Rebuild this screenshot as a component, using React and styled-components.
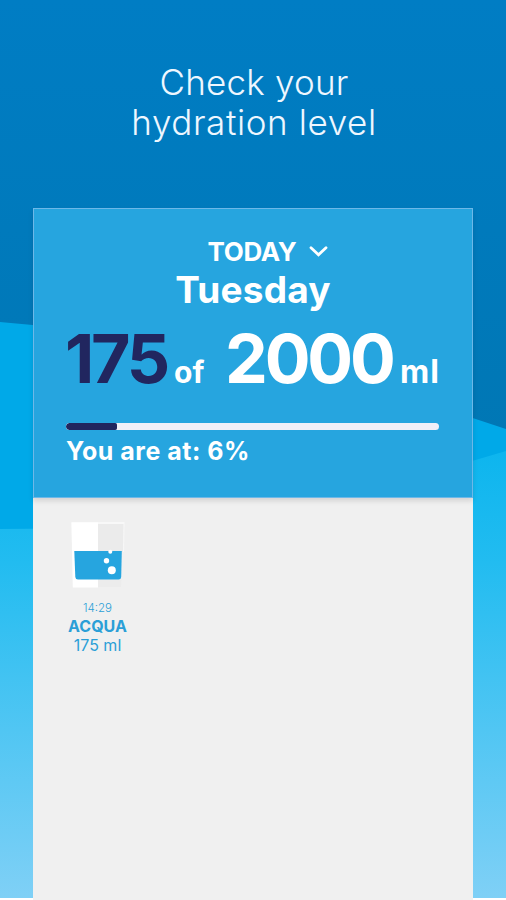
import styled, { createGlobalStyle } from 'styled-components';

const consumed = { amount: 175, goal: 2000, percent: 6, barWidth: 13.7 };

const drinks = [{ time: '14:29', name: 'ACQUA', amount: '175 ml' }];

const App = () => {
  return (
    <>
      <GlobalStyle />
      <Screen>
        <Backdrop />
        <Headline>
          <HeadlineLine $spacing='0.2px'>Check your</HeadlineLine>
          <HeadlineLine $spacing='0.6px'>hydration level</HeadlineLine>
        </Headline>
        <Phone>
          <Summary>
            <Period>
              <span>TODAY</span>
              <Chevron />
            </Period>
            <Day>Tuesday</Day>
            <Amounts>
              <Consumed>{consumed.amount}</Consumed>
              <Of>of</Of>
              <Goal>{consumed.goal}</Goal>
              <Unit>ml</Unit>
            </Amounts>
            <Track>
              <Progress style={{ width: `${consumed.barWidth}%` }} />
            </Track>
            <Status>You are at: {consumed.percent}%</Status>
          </Summary>
          <DrinkList>
            {drinks.map((drink) => (
              <Drink key={drink.time}>
                <Glass />
                <DrinkTime>{drink.time}</DrinkTime>
                <DrinkName>{drink.name}</DrinkName>
                <DrinkAmount>{drink.amount}</DrinkAmount>
              </Drink>
            ))}
          </DrinkList>
        </Phone>
      </Screen>
    </>
  );
};

const Backdrop = () => (
  <BackdropSvg viewBox='0 0 506 900' preserveAspectRatio='none'>
    <defs>
      <linearGradient id='deep' x1='0' y1='0' x2='0' y2='1'>
        <stop offset='0' stopColor='#007dc4' />
        <stop offset='1' stopColor='#0077b4' />
      </linearGradient>
      <linearGradient id='shallow' x1='0' y1='450' x2='0' y2='898' gradientUnits='userSpaceOnUse'>
        <stop offset='0' stopColor='#0db5ee' />
        <stop offset='0.25' stopColor='#22bcf0' />
        <stop offset='1' stopColor='#7fd0f6' />
      </linearGradient>
    </defs>
    <rect width='506' height='900' fill='#fff' />
    <rect width='506' height='460' fill='url(#deep)' />
    <path d='M0 322 Q250 343 506 429 V898 H0Z' fill='#00a9e8' />
    <path d='M0 529 Q250 529 506 451 V898 H0Z' fill='url(#shallow)' />
  </BackdropSvg>
);

const Chevron = () => (
  <svg width='20' height='14' viewBox='0 0 20 14' fill='none'>
    <path
      d='M3 3.8 L10.5 10.8 L18 3.8'
      stroke='#fff'
      strokeWidth='2.8'
      strokeLinecap='round'
    />
  </svg>
);

const Glass = () => (
  <GlassSvg width='56' height='68' viewBox='0 0 56 68'>
    <path d='M1.5 1 H54.5 L54 31 H2Z' fill='#f8f8f8' />
    <path d='M1.5 1.5 H28 V66.5 H2.8Z' fill='#fff' />
    <path d='M28 3 H53.5 L53 31 H28Z' fill='#ebebeb' />
    <path d='M28 58 H51.5 L51 66 H28Z' fill='#ececec' />
    <path
      d='M4.3 30 H51.8 L51.2 56 Q51 58.5 48.5 58.5 H8 Q5.6 58.5 5.3 56Z'
      fill='#26a5df'
    />
    <circle cx='40.3' cy='30.7' r='2' fill='#fff' />
    <circle cx='36.5' cy='39.8' r='2.7' fill='#fff' />
    <circle cx='41.8' cy='49.2' r='4' fill='#fff' />
  </GlassSvg>
);

const GlobalStyle = createGlobalStyle`
  * {
    box-sizing: border-box;
  }

  body {
    margin: 0;
    font-family: Inter, 'Liberation Sans', sans-serif;
  }
`;

const Screen = styled.main`
  position: relative;
  display: flex;
  flex-direction: column;
  align-items: center;
  width: 506px;
  height: 900px;
  overflow: hidden;
`;

const BackdropSvg = styled.svg`
  position: absolute;
  inset: 0;
  z-index: -1;
  width: 100%;
  height: 100%;
`;

const Headline = styled.h1`
  width: 100%;
  height: 208px;
  margin: 0;
  padding-top: 62px;
  color: #eef7ff;
  font-size: 35px;
  font-weight: 300;
  line-height: 40px;
  text-align: center;
  flex: none;
`;

const HeadlineLine = styled.span`
  display: block;
  padding-left: 2px;
  letter-spacing: ${({ $spacing }) => $spacing};
`;

const Phone = styled.section`
  display: flex;
  flex-direction: column;
  flex: 1;
  width: 440px;
  background: #f0f0f0;
`;

const Summary = styled.header`
  height: 290px;
  padding: 25px 32px 0;
  border: 1px solid #6db8e8;
  background: #26a5df;
  box-shadow: 0 3px 5px rgba(0, 0, 0, 0.12);
  color: #fff;
  font-weight: 700;
`;

const Period = styled.div`
  display: flex;
  align-items: center;
  justify-content: center;
  gap: 11px;
  height: 34px;
  padding-left: 29px;
  font-size: 26px;
  letter-spacing: -0.3px;
`;

const Day = styled.h2`
  margin: 0;
  font-size: 37px;
  letter-spacing: 0.2px;
  line-height: 44px;
  text-align: center;
`;

const Amounts = styled.div`
  display: flex;
  align-items: baseline;
  height: 82px;
  margin-top: 5px;
  line-height: 82px;
  white-space: nowrap;
`;

const Consumed = styled.span`
  width: 109px;
  margin-left: -1px;
  color: #21265f;
  font-size: 68px;
  letter-spacing: -3.2px;
`;

const Of = styled.span`
  width: 51px;
  font-size: 30px;
`;

const Goal = styled.span`
  width: 175px;
  font-size: 68px;
  letter-spacing: -3.2px;
`;

const Unit = styled.span`
  font-size: 32px;
  letter-spacing: 1px;
`;

const Track = styled.div`
  height: 7px;
  width: 373px;
  margin-top: 24px;
  overflow: hidden;
  border-radius: 4px;
  background: #f0f0f8;
`;

const Progress = styled.div`
  height: 100%;
  border-radius: 4px 2px 2px 4px;
  background: #21265f;
`;

const Status = styled.p`
  margin: 6px 0 0;
  font-size: 25px;
  letter-spacing: 0.5px;
  line-height: 30px;
`;

const DrinkList = styled.div`
  display: flex;
  padding: 23px 26px;
`;

const Drink = styled.article`
  display: flex;
  flex-direction: column;
  align-items: center;
  width: 77px;
  color: #2b9fd7;
`;

const GlassSvg = styled.svg`
  display: block;
  flex: none;
`;

const DrinkTime = styled.time`
  margin-top: 11px;
  font-size: 11.5px;
  font-weight: 300;
  line-height: 16px;
`;

const DrinkName = styled.strong`
  font-size: 16px;
  line-height: 20px;
`;

const DrinkAmount = styled.span`
  font-size: 16px;
  line-height: 19px;
`;

export default App;
